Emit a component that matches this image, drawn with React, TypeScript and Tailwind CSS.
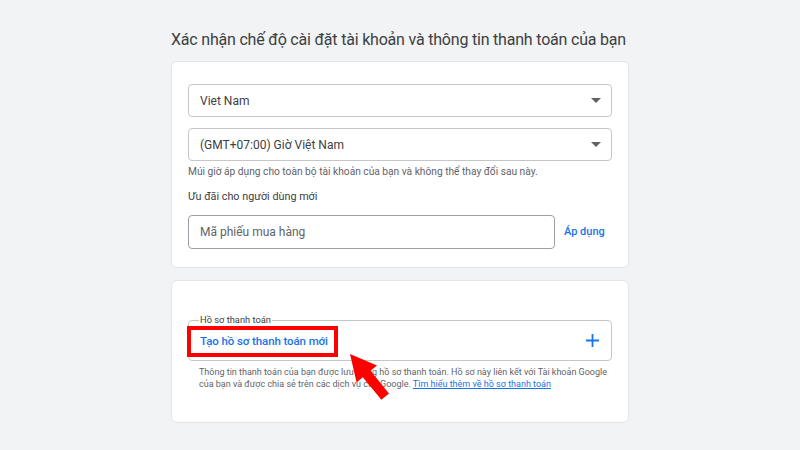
const Caret = () => (
  <svg width="10" height="5" viewBox="0 0 10 5" className="shrink-0">
    <path d="M0 0 L10 0 L5 5 Z" fill="#5f6368" />
  </svg>
);

const Select = ({ value }: { value: string }) => (
  <div className="flex h-[33px] items-center justify-between rounded-[4px] border border-[#c4c7c5] pl-[11px] pr-[10px]">
    <span className="text-[12px] text-[#3c4043]">{value}</span>
    <Caret />
  </div>
);

export default function App() {
  return (
    <div
      className="relative min-h-[450px] w-full bg-[#f1f3f4]"
      style={{ fontFamily: "Roboto, 'Liberation Sans', sans-serif" }}
    >
      <div className="mx-auto w-[458px] pt-[29px]">
        <h1 className="mb-[10px] whitespace-nowrap text-[16px] leading-[22px] tracking-[-0.2px] text-[#3c4043]">
          Xác nhận chế độ cài đặt tài khoản và thông tin thanh toán của bạn
        </h1>

        {/* card 1 */}
        <div className="rounded-[6px] border border-[#e3e5e8] bg-white px-[16px] pb-[18px] pt-[22px]">
          <div className="flex flex-col gap-[11px]">
            <Select value="Viet Nam" />
            <Select value="(GMT+07:00) Giờ Việt Nam" />
          </div>
          <p className="mt-[4px] text-[10.2px] leading-[14px] text-[#5f6368]">
            Múi giờ áp dụng cho toàn bộ tài khoản của bạn và không thể thay đổi sau này.
          </p>
          <p className="mt-[11px] text-[10.8px] leading-[14px] text-[#3c4043]">Ưu đãi cho người dùng mới</p>
          <div className="mt-[11px] flex items-center gap-[9px]">
            <div className="flex h-[34px] w-[367px] items-center rounded-[4px] border border-[#9aa0a6] pl-[11px]">
              <span className="text-[12px] text-[#5f6368]">Mã phiếu mua hàng</span>
            </div>
            <button className="text-[11px] font-medium text-[#1a73e8]">Áp dụng</button>
          </div>
        </div>

        {/* card 2 */}
        <div className="mt-[12px] rounded-[6px] border border-[#e3e5e8] bg-white px-[16px] pb-[32px] pt-[39px]">
          <div className="relative rounded-[4px] border border-[#c4c7c5]">
            <span className="absolute -top-[7px] left-[10px] whitespace-nowrap bg-white px-[1px] text-[9.3px] leading-[12px] text-[#3c4043]">
              Hồ sơ thanh toán
            </span>
            <div className="flex h-[39px] items-center justify-between pl-[11px] pr-[12px]">
              <span className="mt-[2px] text-[11.5px] font-medium tracking-[-0.1px] text-[#1a73e8]">
                Tạo hồ sơ thanh toán mới
              </span>
              <svg width="13" height="13" viewBox="0 0 13 13">
                <path d="M6.5 0 V13 M0 6.5 H13" stroke="#1a73e8" strokeWidth="1.8" />
              </svg>
            </div>
            <div className="absolute left-[-2px] top-[5px] h-[31px] w-[151px] border-4 border-[#ff0000]" />
          </div>
          <div className="mt-[5px] pl-[11px] text-[9px] leading-[12px] text-[#5f6368]">
            <p className="whitespace-nowrap">
              Thông tin thanh toán của bạn được lưu trong hồ sơ thanh toán. Hồ sơ này liên kết với Tài khoản Google
            </p>
            <p className="whitespace-nowrap">
              của bạn và được chia sẻ trên các dịch vụ của Google.{" "}
              <a className="text-[#1a73e8] underline">Tìm hiểu thêm về hồ sơ thanh toán</a>
            </p>
          </div>
        </div>
      </div>

      {/* annotation arrow */}
      <svg className="pointer-events-none absolute left-0 top-0" width="800" height="450">
        <polygon
          points="350,354 377,365.5 370.5,370.8 389,393.5 381.4,399.8 362.8,377.2 356.6,382.6"
          fill="#ff0000"
        />
      </svg>
    </div>
  );
}
